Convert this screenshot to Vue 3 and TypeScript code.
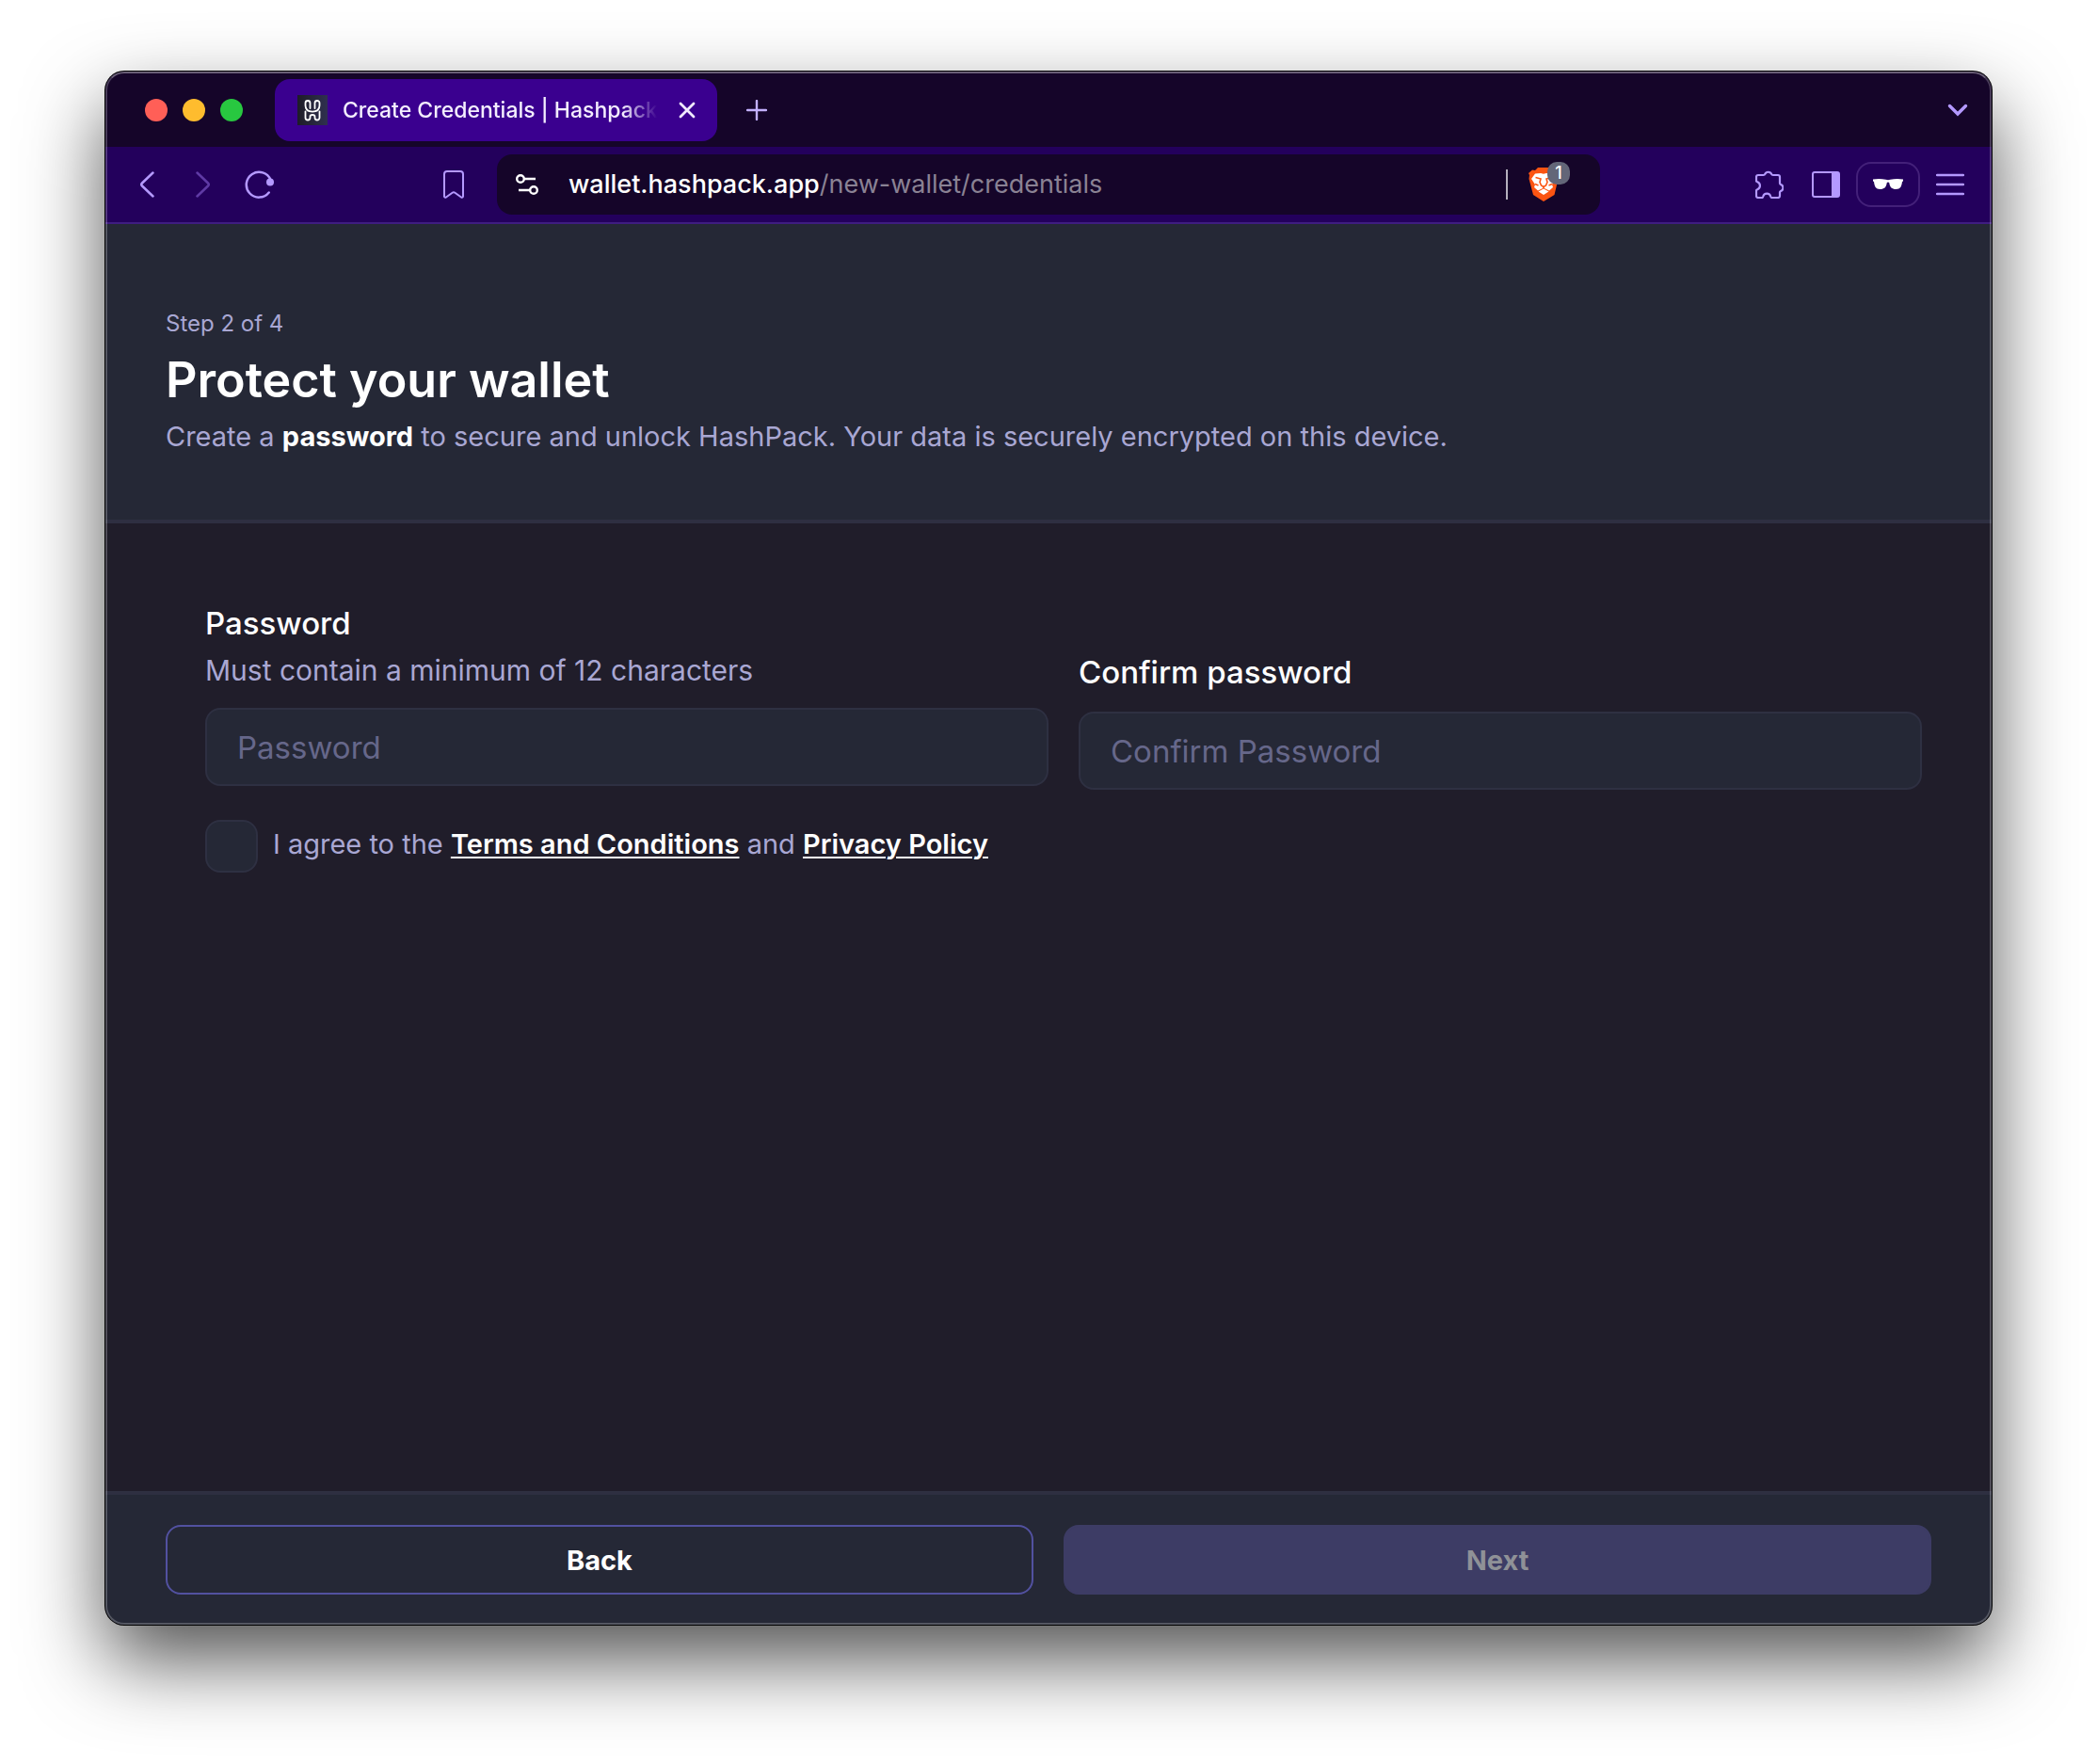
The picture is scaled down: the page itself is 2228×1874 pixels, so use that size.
<script setup lang="ts">
import { ref } from 'vue'

const password = ref('')
const confirmPassword = ref('')
const agreed = ref(false)

const lights = [
  { name: 'Close window', tone: 'red' },
  { name: 'Minimize window', tone: 'amber' },
  { name: 'Zoom window', tone: 'green' },
]
</script>

<template>
  <div class="desktop">
    <div class="window">
      <div class="tab-bar">
        <div class="lights">
          <button v-for="l in lights" :key="l.tone" type="button" :class="['light', l.tone]" :aria-label="l.name"></button>
        </div>
        <div class="tab">
          <svg class="favicon" viewBox="0 0 32 32" width="32" height="32" aria-hidden="true">
            <defs>
              <linearGradient id="fav" x1="0" x2="1" y1="0" y2="0">
                <stop offset="0" stop-color="#1e1c27" />
                <stop offset="1" stop-color="#2f3050" />
              </linearGradient>
            </defs>
            <rect width="32" height="32" fill="url(#fav)" />
            <g fill="none" stroke="#fff" stroke-width="1.8" stroke-linecap="round" stroke-linejoin="round">
              <path d="M13.500 14V8.500a2.500 2.500 0 0 0-5 0V11c0 4.200 3 6.600 7.500 6.600s7.500-2.400 7.500-6.600V8.500a2.500 2.500 0 0 0-5 0V14" />
              <path d="M8.500 17.500V24a2.500 2.500 0 0 0 5 0v-1.200c0-1.200.800-1.800 2.500-1.800s2.500.600 2.500 1.800V24a2.500 2.500 0 0 0 5 0v-6.500" />
            </g>
          </svg>
          <span class="tab-title">Create Credentials | Hashpack</span>
          <button type="button" class="icon-btn tab-close" aria-label="Close tab">
            <svg viewBox="0 0 18 18" width="18" height="18"><path d="M2 2l14 14M16 2L2 16" stroke="#f1eaff" stroke-width="2.800" stroke-linecap="round" /></svg>
          </button>
        </div>
        <button type="button" class="icon-btn new-tab" aria-label="New tab">
          <svg viewBox="0 0 22 22" width="22" height="22"><path d="M11 1v20M1 11h20" stroke="#c3b0ff" stroke-width="2.400" stroke-linecap="round" /></svg>
        </button>
        <button type="button" class="icon-btn tab-search" aria-label="Search tabs">
          <svg viewBox="0 0 22 16" width="22" height="16"><path d="M2.500 3.500l8.500 8.500 8.500-8.500" fill="none" stroke="#b499ff" stroke-width="3.400" stroke-linecap="round" /></svg>
        </button>
      </div>

      <div class="toolbar">
        <button type="button" class="icon-btn" aria-label="Back">
          <svg viewBox="0 0 16 28" width="16" height="28"><path d="M14.500 1.500L3 12.500q-1.500 1.500 0 3l11.500 11" fill="none" stroke="#b499ff" stroke-width="2.500" stroke-linecap="round" /></svg>
        </button>
        <button type="button" class="icon-btn" aria-label="Forward">
          <svg viewBox="0 0 16 28" width="16" height="28"><path d="M1.500 1.500L13 12.500q1.500 1.500 0 3l-11.500 11" fill="none" stroke="#5f3aa5" stroke-width="2.500" stroke-linecap="round" /></svg>
        </button>
        <button type="button" class="icon-btn" aria-label="Reload">
          <svg viewBox="0 0 32 30" width="32" height="30"><path d="M25.700 23.500A13.400 13.400 0 1 1 27.500 10" fill="none" stroke="#b499ff" stroke-width="2.500" stroke-linecap="round" /><circle cx="27" cy="12.500" r="4" fill="#b499ff" /></svg>
        </button>
        <button type="button" class="icon-btn bookmark" aria-label="Bookmark this page">
          <svg viewBox="0 0 22 30" width="22" height="30"><path d="M1 27.500V4a3 3 0 0 1 3-3h14a3 3 0 0 1 3 3v23.500c0 1.200-1.200 1.600-2 1l-6.600-4.700q-1.400-1-2.800 0L3 28.500c-.800.600-2 .200-2-1z" fill="none" stroke="#b499ff" stroke-width="2" /></svg>
        </button>
        <div class="address">
          <button type="button" class="icon-btn site-info" aria-label="View site information">
            <svg viewBox="0 0 24 24" width="24" height="24" fill="none" stroke="#fff" stroke-width="2.400">
              <circle cx="5" cy="6" r="3.800" /><path d="M9 6h12" /><circle cx="19" cy="18" r="3.800" /><path d="M3 18h12" />
            </svg>
          </button>
          <div class="url" role="textbox" aria-label="Address"><span class="host">wallet.hashpack.app</span><span class="path">/new-wallet/credentials</span></div>
          <span class="divider"></span>
          <button type="button" class="icon-btn shield" aria-label="Brave Shields">
            <svg viewBox="0 0 32 36" width="32" height="36">
              <path d="M1 8L0 6l4-3.500 3 .500L10 0h12l3 3 4 0 3 4-1 2 .500 3-4 17L16 36 5 29 .500 12z" fill="#fb5412" />
              <path d="M7 6.500L13 6l3 .800L19 6l6 .500 4 5.500-4 6 1 3-4 3.500-6-3-6 3L6 21l1-3-4-6z" fill="#fff" />
              <path d="M16 22.500l5.500 3L16 29l-5.500-3.500z" fill="#fff" />
              <path d="M7.500 10.500L13 12l-1 3.500 1.500 3.500 2.500 1.500 2.500-1.500 1.500-3.500-1-3.500 5.500-1.500M16 20.500v1.500" fill="none" stroke="#fb5412" stroke-width="1.600" />
              <path d="M7 17.500l3.500 1.500M25 17.500L21.500 19" fill="none" stroke="#fb5412" stroke-width="1.400" />
            </svg>
            <span class="badge">1</span>
          </button>
        </div>
        <button type="button" class="icon-btn extensions" aria-label="Extensions">
          <svg viewBox="0 0 30 30" width="30" height="30"><path d="M3 5h5.500C9.600 5 10 4.600 10.200 4a3.700 3.300 0 0 1 7 0c.200.600.600 1 1.700 1H24a2 2 0 0 1 2 2v6.500c0 1 .400 1.200 1 1.500a3.700 3.700 0 0 1 0 7c-.600.300-1 .500-1 1.300V27a2 2 0 0 1-2 2h-6.500c-1 0-1-.600-1.200-1.200a4.200 4.200 0 0 0-8.100 0C8 28.400 7.800 29 7 29H3a2 2 0 0 1-2-2v-5.500c0-.800.500-1 1.200-1.300a4.300 4.300 0 0 0 0-8C1.500 12 1 11.700 1 11V7a2 2 0 0 1 2-2z" fill="none" stroke="#b499ff" stroke-width="2.200" stroke-linejoin="round" /></svg>
        </button>
        <button type="button" class="icon-btn" aria-label="Sidebar">
          <svg viewBox="0 0 30 28" width="30" height="28"><rect x="1" y="1" width="28" height="26" rx="2" fill="none" stroke="#b499ff" stroke-width="2" /><path d="M21 1h7a1 1 0 0 1 1 1v24a1 1 0 0 1-1 1h-7z" fill="#b499ff" /></svg>
        </button>
        <button type="button" class="icon-btn private" aria-label="Private window">
          <svg viewBox="0 0 34 14" width="34" height="14"><path d="M1 1.500Q8 .200 14.500 1.800 17 2.600 19.500 1.800 26 .200 33 1.500v2l-1 .500c-.500 5-2 8-6.500 8C21 12 19 10 18.200 5c-.600-.800-1.800-.800-2.400 0C15 10 13 12 8.500 12 4 12 2.500 9 2 4l-1-.500z" fill="#fff" /></svg>
        </button>
        <button type="button" class="icon-btn menu" aria-label="Menu">
          <svg viewBox="0 0 30 24" width="30" height="24"><path d="M1 2h28M1 12h28M1 22h28" stroke="#b499ff" stroke-width="2.400" stroke-linecap="round" /></svg>
        </button>
      </div>

      <header class="intro">
        <p class="step">Step 2 of 4</p>
        <h1>Protect your wallet</h1>
        <p class="lead">Create a <strong>password</strong> to secure and unlock HashPack. Your data is securely encrypted on this device.</p>
      </header>

      <form id="credentials" class="form" @submit.prevent>
        <div class="fields">
          <div class="field first">
            <label for="password">Password</label>
            <p id="hint" class="hint">Must contain a minimum of 12 characters</p>
            <input id="password" v-model="password" type="password" placeholder="Password" aria-describedby="hint" />
          </div>
          <div class="field">
            <label for="confirm">Confirm password</label>
            <input id="confirm" v-model="confirmPassword" type="password" placeholder="Confirm Password" />
          </div>
        </div>
        <div class="agree">
          <input id="agree" v-model="agreed" type="checkbox" />
          <label for="agree">I agree to the <a href="#terms">Terms and Conditions</a> and <a href="#privacy">Privacy Policy</a></label>
        </div>
      </form>

      <footer class="actions">
        <button type="button" class="action back">Back</button>
        <button type="submit" form="credentials" class="action next" disabled>Next</button>
      </footer>
    </div>
  </div>
</template>

<style>
body {
  background: #fff;
}
</style>

<style scoped>
* {
  box-sizing: border-box;
}

.desktop {
  display: flex;
  min-height: 100vh;
  padding: 76px 112px 148px;
  font-family: Inter, 'Liberation Sans', sans-serif;
}

.window {
  position: relative;
  display: flex;
  flex: 1;
  flex-direction: column;
  min-width: 0;
  border-radius: 20px;
  background: #201d2a;
  box-shadow: 0 0 0 1px #000, 0 38px 84px rgba(0, 0, 0, 0.68);
  overflow: hidden;
}

/* light rim drawn over everything in the window */
.window::after {
  content: '';
  position: absolute;
  inset: 0;
  border: 2px solid rgba(255, 255, 255, 0.22);
  border-top-color: rgba(255, 255, 255, 0.36);
  border-radius: 20px;
  pointer-events: none;
}

button {
  font-family: inherit;
}

.icon-btn {
  display: flex;
  flex: none;
  align-items: center;
  justify-content: center;
  width: 60px;
  height: 48px;
  padding: 0;
  border: 0;
  background: none;
}

.icon-btn svg {
  display: block;
}

.tab-bar {
  display: flex;
  align-items: center;
  height: 80px;
  padding: 2px 6px 0 42px;
  background: #150529;
}

.lights {
  display: flex;
  gap: 16px;
  margin-right: 34px;
}

.light {
  width: 24px;
  height: 24px;
  padding: 0;
  border: 0;
  border-radius: 50%;
}

.red {
  background: #ff5f57;
}

.amber {
  background: #febc2e;
}

.green {
  background: #28c840;
}

.tab {
  display: flex;
  align-items: center;
  width: 470px;
  height: 66px;
  padding: 0 16px 0 24px;
  border-radius: 16px;
  background: #3a008f;
}

.favicon {
  flex: none;
  margin-right: 16px;
}

.tab-title {
  flex: 1;
  overflow: hidden;
  color: #f4eeff;
  font-size: 23px;
  font-weight: 500;
  line-height: 32px;
  white-space: nowrap;
  mask-image: linear-gradient(to right, #000 calc(100% - 36px), transparent);
}

.tab-close {
  width: 32px;
  margin-left: 16px;
}

.new-tab {
  margin-left: 12px;
}

.tab-search {
  margin-left: auto;
}

.toolbar {
  display: flex;
  align-items: center;
  height: 82px;
  padding: 0 14px;
  border-bottom: 2px solid #3f1d80;
  background: #23005c;
}

.bookmark {
  margin: 0 16px 0 146px;
}

.address {
  display: flex;
  flex: 1;
  align-items: center;
  min-width: 0;
  height: 64px;
  padding: 0 28px 0 16px;
  border-radius: 16px;
  background: #150529;
}

.site-info {
  width: 32px;
  margin-right: 28px;
}

.url {
  flex: 1;
  overflow: hidden;
  color: #fff;
  font-size: 27px;
  line-height: 40px;
  white-space: nowrap;
}

.host {
  font-weight: 500;
}

.path {
  color: #8a8294;
}

.divider {
  width: 2px;
  height: 32px;
  margin-right: 22px;
  background: #b5b0bd;
}

.shield {
  position: relative;
  justify-content: flex-start;
  width: 48px;
}

.badge {
  position: absolute;
  top: 0;
  left: 20px;
  width: 24px;
  height: 24px;
  border-radius: 10px;
  background: #636678;
  color: #fff;
  font-size: 18px;
  font-weight: 500;
  line-height: 24px;
}

.extensions {
  margin-left: 150px;
}

.private {
  width: 68px;
  margin: 0 2px;
  border: 2px solid #432079;
  border-radius: 16px;
}

.intro {
  padding: 90px 64px 68px;
  border-bottom: 4px solid #2e2f41;
  background: #252836;
  color: #a9a7d3;
}

.step {
  margin: 0 0 12px;
  font-size: 24px;
  line-height: 32px;
}

h1 {
  margin: 0 0 8px;
  color: #fff;
  font-size: 52px;
  font-weight: 600;
  line-height: 64px;
}

.lead {
  margin: 0;
  font-size: 29px;
  line-height: 40px;
}

strong {
  color: #fff;
  font-weight: 700;
}

.form {
  flex: 1;
  padding: 86px 74px 64px 106px;
}

.fields {
  display: grid;
  grid-template-columns: 1fr 1fr;
  align-items: end;
  gap: 32px;
}

.field {
  display: flex;
  flex-direction: column;
}

.first {
  padding-bottom: 4px;
}

.field label {
  margin-bottom: 22px;
  color: #fff;
  font-size: 33px;
  font-weight: 500;
  line-height: 40px;
}

.first label {
  margin-bottom: 10px;
}

.hint {
  margin: 0 0 20px;
  color: #a9a7d3;
  font-size: 30px;
  line-height: 40px;
}

.field input {
  width: 100%;
  height: 83px;
  padding: 0 32px;
  border: 2px solid #2e3042;
  border-radius: 16px;
  outline: none;
  background: #252836;
  color: #fff;
  font-family: inherit;
  font-size: 33px;
}

.field input::placeholder {
  color: #66678a;
  opacity: 1;
}

.agree {
  display: flex;
  align-items: center;
  gap: 16px;
  margin-top: 32px;
}

.agree input {
  flex: none;
  width: 56px;
  height: 56px;
  margin: 0;
  border: 2px solid #2e3042;
  border-radius: 16px;
  background: #252836;
  appearance: none;
}

.agree input:checked {
  background: #5251a0;
}

.agree label {
  padding-bottom: 4px;
  color: #a9a7d3;
  font-size: 29px;
  line-height: 40px;
}

.agree a {
  color: #fff;
  font-weight: 600;
  text-decoration: underline;
  text-decoration-thickness: 2px;
  text-underline-offset: 3px;
}

.actions {
  display: flex;
  gap: 32px;
  padding: 32px 64px;
  border-top: 4px solid #2e2f41;
  background: #252836;
}

.action {
  flex: 1;
  height: 74px;
  border: 2px solid #5251a0;
  border-radius: 16px;
  background: none;
  color: #fff;
  font-size: 29px;
  font-weight: 700;
}

.next {
  border-color: #3d3c65;
  background: #3d3c65;
  color: #8f9197;
}
</style>
